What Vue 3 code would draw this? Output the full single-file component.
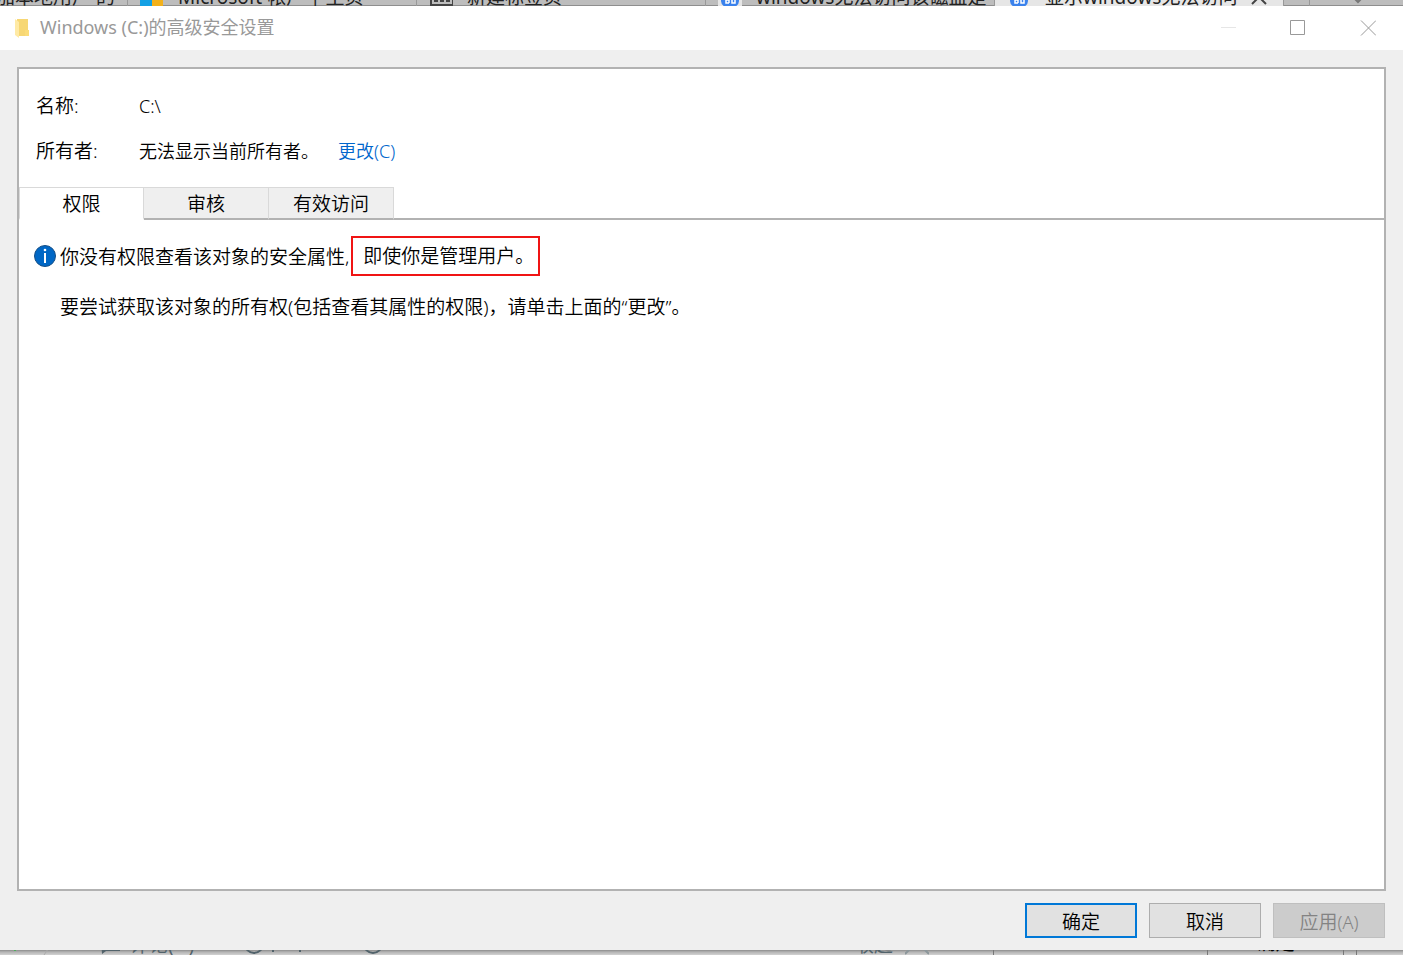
<template>
  <div class="screen">
    <!-- 后方浏览器标签 -->
    <div class="back-tabs">
      <div class="back-tab first"><span>加本地用户 的</span></div>
      <div class="back-tab">
        <svg class="tab-icon" viewBox="0 0 24 24">
          <rect x="0" y="0" width="12" height="24" fill="#14a0e4" />
          <rect x="12" y="0" width="11" height="24" fill="#f3b11a" />
        </svg>
        <span>Microsoft 帐户 | 主页</span>
      </div>
      <div class="back-tab">
        <svg class="tab-icon" viewBox="0 0 24 24">
          <path d="M2 4H24V23H2Z" fill="none" stroke="#444" stroke-width="2" />
          <path d="M5 19H22" stroke="#444" stroke-width="2" stroke-dasharray="4 2" />
        </svg>
        <span>新建标签页</span>
      </div>
      <div class="back-tab">
        <svg class="tab-icon" viewBox="0 0 24 24">
          <rect width="24" height="24" fill="#e6e6e6" />
          <ellipse cx="12" cy="19" rx="9" ry="7" fill="#3b82ec" />
          <path d="M11 14V21M11 21H8V18H11M14 17V21H17V17" fill="none" stroke="#fff" stroke-width="1.500" />
        </svg>
        <span>windows无法访问该磁盘是</span>
      </div>
      <div class="back-tab active">
        <svg class="tab-icon" viewBox="0 0 24 24">
          <ellipse cx="12" cy="19" rx="9" ry="7" fill="#3b82ec" />
          <path d="M11 14V21M11 21H8V18H11M14 17V21H17V17" fill="none" stroke="#fff" stroke-width="1.500" />
        </svg>
        <span class="grow">显示windows无法访问</span>
        <svg class="tab-close" viewBox="0 0 16 24">
          <path d="M1 8L15 22M15 8L1 22" stroke="#444" stroke-width="2" />
        </svg>
      </div>
      <div class="back-tab gap"></div>
      <div class="back-tab more">
        <svg class="tab-close" viewBox="0 0 16 24">
          <path d="M2 14L8 20L14 14" fill="none" stroke="#777" stroke-width="2" />
        </svg>
      </div>
    </div>

    <main class="dialog">
      <header class="title-bar">
        <svg class="folder" viewBox="0 0 16 20">
          <path d="M3 1H14V12H15V18H3Z" fill="#f7d774" />
          <path d="M11 12H15V18H11Z" fill="#fbdc79" />
          <path d="M1 1L5 4V20L1 17Z" fill="#ffeaa5" />
        </svg>
        <h1 class="title">Windows (C:)的高级安全设置</h1>
        <button class="win-btn" aria-label="最小化" disabled>
          <svg viewBox="0 0 16 16"><path d="M1 7.500H16" stroke="#e6e6e6" /></svg>
        </button>
        <button class="win-btn" aria-label="最大化">
          <svg viewBox="0 0 16 16"><path d="M.5 .5H14.500V14.500H.5Z" fill="none" stroke="#999" /></svg>
        </button>
        <button class="win-btn" aria-label="关闭">
          <svg viewBox="0 0 16 16"><path d="M1 .5L16 15.500M16 .5L1 15.500" stroke="#999" /></svg>
        </button>
      </header>

      <section class="frame">
        <dl class="info">
          <dt>名称:</dt>
          <dd>C:\</dd>
          <dt>所有者:</dt>
          <dd>无法显示当前所有者。<a class="change" href="#">更改(C)</a></dd>
        </dl>

        <div class="tabs" role="tablist">
          <button
            v-for="tab in tabs"
            :key="tab"
            class="tab"
            :class="{ active: tab === current }"
            role="tab"
            :aria-selected="tab === current"
            @click="current = tab"
          >
            {{ tab }}
          </button>
          <div class="tabs-rest"></div>
        </div>

        <div class="panel" role="tabpanel">
          <p class="message">
            <svg class="info-icon" viewBox="0 0 22 22">
              <circle cx="11" cy="11" r="10.500" fill="#0067c5" stroke="#164f86" />
              <path d="M11 8V18" stroke="#fff" stroke-width="2" />
              <circle cx="11" cy="5" r="1.300" fill="#fff" />
            </svg>
            <span>你没有权限查看该对象的安全属性,</span>
            <span class="marked">即使你是管理用户。</span>
          </p>
          <p class="message hint">要尝试获取该对象的所有权(包括查看其属性的权限)，请单击上面的“更改”。</p>
        </div>
      </section>

      <footer class="actions">
        <button class="btn primary">确定</button>
        <button class="btn">取消</button>
        <button class="btn" disabled>应用<small>(A)</small></button>
      </footer>
    </main>

    <!-- 后方页面底边 -->
    <div class="back-bottom">
      <div class="page">
        <svg class="page-icons" viewBox="0 0 130 24">
          <path d="M14 19.500H16" stroke="#4fae5c" />
          <path d="M48 18L44 24" stroke="#aaa" />
          <path d="M101 8H120V20H106L102 23Z" fill="#52636b" />
        </svg>
        <span class="comment">评论(&nbsp;&nbsp;&nbsp;)</span>
        <svg class="page-icons" viewBox="0 0 130 24">
          <circle cx="56" cy="13" r="9" fill="none" stroke="#52636b" stroke-width="2" />
          <path d="M75 16V21M102 16V21" stroke="#52636b" stroke-width="2" />
        </svg>
        <svg class="page-icons" viewBox="0 0 130 24">
          <circle cx="45" cy="13" r="9" fill="none" stroke="#52636b" stroke-width="2" />
        </svg>
        <span class="fold">收起</span>
        <svg class="fold-icon" viewBox="0 0 24 24">
          <path d="M0 23L12 11L24 23" fill="none" stroke="#8b969a" stroke-width="2" />
        </svg>
      </div>
      <div class="side"></div>
      <div class="side ok">确定</div>
      <div class="side slim"></div>
      <div class="side slim"></div>
    </div>
  </div>
</template>

<script setup>
import { ref } from 'vue'

const tabs = ['权限', '审核', '有效访问']
const current = ref('权限')
</script>

<style>
body {
  margin: 0;
}
</style>

<style scoped>
.screen {
  display: flex;
  flex-direction: column;
  min-height: 100vh;
  font-family: "Noto Sans", "Noto Sans CJK SC", sans-serif;
  font-size: 19px;
  font-weight: 350;
  color: #000;
}

button {
  font: inherit;
  color: inherit;
  padding: 0;
  margin: 0;
}

.back-tabs {
  display: flex;
  height: 6px;
  overflow: hidden;
  align-items: flex-end;
  background: #bdbdbd;
  box-shadow: inset 0 -1px #8e8e8e;
  color: #222;
  font-weight: 400;
}

.back-tab {
  display: flex;
  align-items: center;
  flex: 0 0 289px;
  height: 24px;
  padding-left: 12px;
  box-sizing: border-box;
  border-right: 1px solid #999;
  line-height: 24px;
  white-space: nowrap;
  overflow: hidden;
}

.back-tab span {
  padding-top: 6px;
}

.back-tab.first {
  flex-basis: 128px;
  justify-content: flex-end;
  padding: 0 12px 0 0;
}

.back-tab.active {
  background: #e6e6e6;
}

.back-tab.gap {
  flex-basis: 26px;
}

.back-tab.more {
  flex: 1;
  padding-left: 40px;
  border: none;
}

.grow {
  flex: 1;
}

.tab-icon {
  flex: none;
  width: 24px;
  height: 24px;
  margin-right: 14px;
}

.tab-close {
  flex: none;
  width: 16px;
  height: 24px;
  margin-right: 16px;
}

.dialog {
  display: flex;
  flex-direction: column;
  flex: 1;
  background: #efefef;
}

.title-bar {
  display: flex;
  align-items: center;
  height: 44px;
  padding-left: 14px;
  background: #fff;
  color: #999;
}

.folder {
  width: 16px;
  height: 20px;
  margin-right: 10px;
}

.title {
  flex: 1;
  margin: 0;
  padding-bottom: 4px;
  font-size: 18px;
  font-weight: 400;
}

.win-btn {
  display: flex;
  align-items: center;
  justify-content: center;
  width: 70px;
  height: 44px;
  border: none;
  background: none;
}

.win-btn svg {
  width: 16px;
  height: 16px;
}

.frame {
  display: flex;
  flex-direction: column;
  flex: 1;
  margin: 17px 17px 0;
  border: 2px solid #b2b2b2;
  background: #fff;
}

.info {
  display: grid;
  grid-template-columns: 103px 1fr;
  row-gap: 17px;
  margin: 0;
  padding: 23px 17px 22px;
  line-height: 28px;
}

.info dd {
  margin: 0;
  font-size: 18px;
}

.change {
  margin-left: 19px;
  color: #0066cc;
  text-decoration: none;
}

.tabs {
  display: flex;
  height: 33px;
}

.tab {
  width: 125px;
  border: 1px solid #d9d9d9;
  border-left: none;
  border-bottom: 2px solid #b2b2b2;
  background: #efefef;
}

.tab.active {
  border-left: 1px solid #d9d9d9;
  border-bottom-color: #fff;
  background: #fff;
}

.tabs-rest {
  flex: 1;
  border-bottom: 2px solid #b2b2b2;
}

.panel {
  padding: 16px 15px;
}

.message {
  display: flex;
  align-items: center;
  min-height: 40px;
  margin: 0 0 10px;
}

.info-icon {
  width: 22px;
  height: 22px;
  margin-right: 4px;
}

.hint {
  padding-left: 26px;
}

.marked {
  margin-left: 2px;
  padding: 0 4px 0 10px;
  border: 2px solid #f01414;
  line-height: 36px;
}

.actions {
  display: flex;
  justify-content: flex-end;
  gap: 12px;
  padding: 12px 18px;
}

.btn {
  width: 112px;
  height: 35px;
  border: 1px solid #adadad;
  background: #e1e1e1;
}

.btn.primary {
  border: 2px solid #0078d7;
}

.btn:disabled {
  border-color: #bfbfbf;
  background: #cccccc;
  color: #838383;
}

.btn small {
  font-size: 18px;
}

.back-bottom {
  display: flex;
  height: 5px;
  overflow: hidden;
  align-items: flex-end;
  background: linear-gradient(#8c8c8c, #b4b4b4 40%, #d2d2d2);
  font-weight: 400;
}

.page {
  display: flex;
  align-items: center;
  flex: 1;
  height: 24px;
  line-height: 24px;
  color: #52636b;
}

.page span {
  padding-top: 4px;
}

.page-icons {
  flex: none;
  width: 130px;
  height: 24px;
}

.comment {
  width: 68px;
}

.fold {
  margin-left: auto;
}

.fold-icon {
  width: 24px;
  height: 24px;
  margin: 0 64px 0 12px;
}

.side {
  width: 214px;
  height: 24px;
  box-sizing: border-box;
  border-left: 1px solid #777;
}

.side.ok {
  width: 136px;
  line-height: 24px;
  text-align: center;
}

.side.slim {
  width: 13px;
}

.side.slim:last-child {
  width: 47px;
}
</style>
